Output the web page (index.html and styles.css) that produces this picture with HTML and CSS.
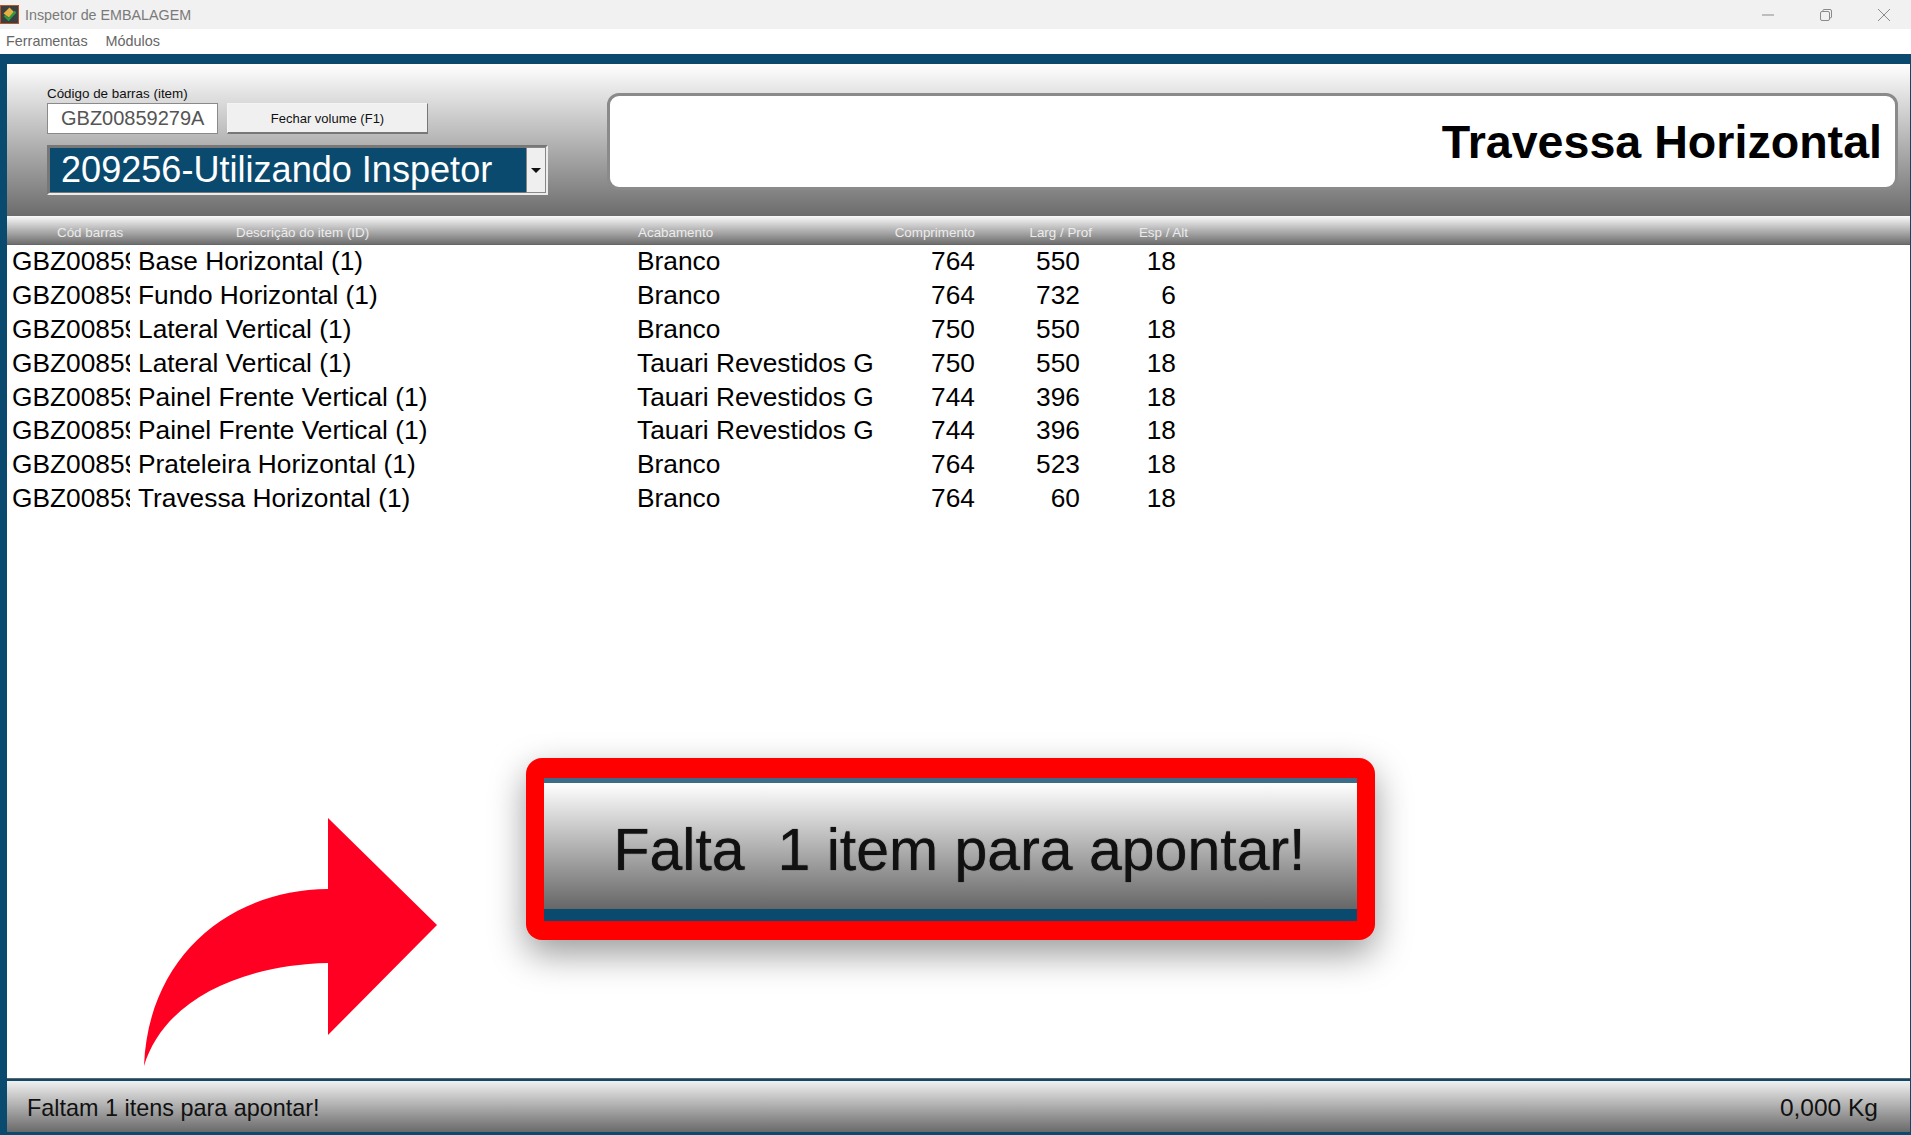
FILE: index.html
```html
<!DOCTYPE html>
<html lang="en">

<head>
    <meta charset="UTF-8">
    <meta name="viewport" content="width=device-width, initial-scale=1.0">
    <title>Inspetor de EMBALAGEM</title>
    <link rel="stylesheet" href="styles.css">
</head>

<body>
    <div class="titlebar">
        <svg class="app-icon" viewBox="0 0 19 19" width="19" height="19">
            <rect x="0.5" y="0.5" width="18" height="18" fill="#3a3f42" stroke="#b5532a" />
            <path d="M9.5 2.5 L15.5 8.5 L9.5 13 L3.5 8.5 Z" fill="#e6b13e" />
            <path d="M4.5 10.5 L8.5 14.5 L15.5 6.5" fill="none" stroke="#2f9a3f" stroke-width="2.4" />
        </svg>
        <span class="app-name">Inspetor de EMBALAGEM</span>
        <div class="win-controls">
            <svg viewBox="0 0 14 14" width="14" height="14">
                <path d="M1 7 H13" stroke="#8a8a8a" fill="none" />
            </svg>
            <svg viewBox="0 0 14 14" width="14" height="14">
                <rect x="1.5" y="3.5" width="9" height="9" rx="1.5" stroke="#8a8a8a" fill="none" />
                <path d="M4 3.5 V2.5 Q4 1.5 5 1.5 H11 Q12.5 1.5 12.5 3 V9 Q12.5 10 11 10" stroke="#8a8a8a" fill="none" />
            </svg>
            <svg viewBox="0 0 14 14" width="14" height="14">
                <path d="M1 1 L13 13 M13 1 L1 13" stroke="#8a8a8a" fill="none" />
            </svg>
        </div>
    </div>

    <div class="menubar">
        <span>Ferramentas</span>
        <span>Módulos</span>
    </div>

    <div class="main">
        <div class="top-panel">
            <div class="scan-col">
                <label class="scan-label">Código de barras (item)</label>
                <div class="scan-row">
                    <div class="scan-input">GBZ00859279A</div>
                    <button class="close-btn">Fechar volume (F1)</button>
                </div>
                <div class="order-select">
                    <span>209256-Utilizando Inspetor</span>
                    <div class="select-arrow"><i></i></div>
                </div>
            </div>
            <div class="current-item">Travessa Horizontal</div>
        </div>

        <div class="list-header row-grid">
            <div class="h-code">Cód barras</div>
            <div class="h-desc">Descrição do item (ID)</div>
            <div class="h-finish">Acabamento</div>
            <div class="h-num">Comprimento</div>
            <div class="h-num">Larg / Prof</div>
            <div class="h-num">Esp / Alt</div>
        </div>

        <div class="list">
            <div class="item row-grid">
                <div class="c-code">GBZ00859</div>
                <div class="c-desc">Base Horizontal (1)</div>
                <div class="c-finish">Branco</div>
                <div class="c-num">764</div>
                <div class="c-num inset">550</div>
                <div class="c-num inset">18</div>
            </div>
            <div class="item row-grid">
                <div class="c-code">GBZ00859</div>
                <div class="c-desc">Fundo Horizontal (1)</div>
                <div class="c-finish">Branco</div>
                <div class="c-num">764</div>
                <div class="c-num inset">732</div>
                <div class="c-num inset">6</div>
            </div>
            <div class="item row-grid">
                <div class="c-code">GBZ00859</div>
                <div class="c-desc">Lateral Vertical (1)</div>
                <div class="c-finish">Branco</div>
                <div class="c-num">750</div>
                <div class="c-num inset">550</div>
                <div class="c-num inset">18</div>
            </div>
            <div class="item row-grid">
                <div class="c-code">GBZ00859</div>
                <div class="c-desc">Lateral Vertical (1)</div>
                <div class="c-finish">Tauari Revestidos G</div>
                <div class="c-num">750</div>
                <div class="c-num inset">550</div>
                <div class="c-num inset">18</div>
            </div>
            <div class="item row-grid">
                <div class="c-code">GBZ00859</div>
                <div class="c-desc">Painel Frente Vertical (1)</div>
                <div class="c-finish">Tauari Revestidos G</div>
                <div class="c-num">744</div>
                <div class="c-num inset">396</div>
                <div class="c-num inset">18</div>
            </div>
            <div class="item row-grid">
                <div class="c-code">GBZ00859</div>
                <div class="c-desc">Painel Frente Vertical (1)</div>
                <div class="c-finish">Tauari Revestidos G</div>
                <div class="c-num">744</div>
                <div class="c-num inset">396</div>
                <div class="c-num inset">18</div>
            </div>
            <div class="item row-grid">
                <div class="c-code">GBZ00859</div>
                <div class="c-desc">Prateleira Horizontal (1)</div>
                <div class="c-finish">Branco</div>
                <div class="c-num">764</div>
                <div class="c-num inset">523</div>
                <div class="c-num inset">18</div>
            </div>
            <div class="item row-grid">
                <div class="c-code">GBZ00859</div>
                <div class="c-desc">Travessa Horizontal (1)</div>
                <div class="c-finish">Branco</div>
                <div class="c-num">764</div>
                <div class="c-num inset">60</div>
                <div class="c-num inset">18</div>
            </div>

            <!-- callout drawn on top of the list -->
            <svg class="callout-arrow" viewBox="0 0 300 250" width="300" height="250">
                <path d="M4 248 C8 140 88 72 188 71 L188 0 L297 107 L188 217 L188 145 C100 147 24 182 4 248 Z" fill="#ff0022" />
            </svg>
            <div class="callout">
                <div class="callout-inner">Falta&nbsp; 1 item para apontar!</div>
            </div>
        </div>

        <div class="status">
            <span>Faltam 1 itens para apontar!</span>
            <span class="weight">0,000 Kg</span>
        </div>
    </div>
</body>

</html>
```

FILE: styles.css
```css
* {
    box-sizing: border-box;
}

body {
    margin: 0;
    height: 1135px;
    overflow: hidden;
    display: flex;
    flex-direction: column;
    font-family: "Liberation Sans", Arial, sans-serif;
    background-color: white;
}

.titlebar {
    height: 29px;
    display: flex;
    align-items: center;
    background-color: #f1f1f1;
    color: #7a7a7a;
    font-size: 14.3px;
}

.app-icon {
    flex-shrink: 0;
}

.app-name {
    margin-left: 6px;
}

.win-controls {
    margin-left: auto;
    display: flex;
    gap: 44px;
    padding-right: 20px;
}

.menubar {
    height: 25px;
    display: flex;
    align-items: center;
    gap: 18px;
    padding: 0 0 2px 6px;
    background-color: white;
    color: #666;
    font-size: 14.4px;
}

.main {
    flex: 1;
    display: flex;
    flex-direction: column;
    min-height: 0;
    padding: 10px 1px 3px 7px;
    background-color: #0a4a6e;
}

.top-panel {
    height: 152px;
    flex-shrink: 0;
    display: flex;
    background: linear-gradient(#ffffff, #6c6c6c);
}

.scan-col {
    width: 600px;
    padding: 22px 0 0 40px;
}

.scan-label {
    display: block;
    height: 17px;
    font-size: 13.4px;
    line-height: 15px;
    color: #111;
}

.scan-row {
    display: flex;
    gap: 9px;
}

.scan-input {
    width: 171px;
    height: 31px;
    border: 1px solid #8a8a8a;
    background-color: white;
    color: #555;
    font-size: 20px;
    line-height: 29px;
    padding-left: 13px;
}

.close-btn {
    width: 201px;
    height: 31px;
    padding: 0;
    font-family: inherit;
    font-size: 13px;
    color: #111;
    background-color: #f0f0f0;
    border: 1px solid #f4f4f4;
    border-right-color: #777;
    border-bottom: 2px solid #777;
}

.order-select {
    width: 501px;
    height: 50px;
    margin-top: 11px;
    display: flex;
    justify-content: space-between;
    background-color: #0a4a6e;
    border: 2px solid #ececec;
    border-top-color: #777;
    border-left-color: #777;
    box-shadow: inset 0 0 0 1px #777;
    color: white;
    font-size: 36.1px;
    line-height: 45px;
    padding-left: 12px;
}

.select-arrow {
    width: 20px;
    display: flex;
    align-items: center;
    justify-content: center;
    background-color: #efefef;
    border: 1px solid #888;
}

.select-arrow i {
    width: 0;
    height: 0;
    border-left: 5px solid transparent;
    border-right: 5px solid transparent;
    border-top: 5px solid #111;
}

.current-item {
    flex: 1;
    height: 97px;
    margin: 29px 12px 0 0;
    padding-right: 13px;
    display: flex;
    align-items: center;
    justify-content: flex-end;
    background-color: white;
    border: 3px solid #8a8a8a;
    border-radius: 12px;
    color: black;
    font-size: 46.6px;
    font-weight: bold;
}

.row-grid {
    display: grid;
    grid-template-columns: 127px 499px 247px 99px 117px 96px;
}

.list-header {
    height: 29px;
    padding-top: 5px;
    flex-shrink: 0;
    align-items: center;
    background: linear-gradient(#fafafa, #6e6e6e);
    border-bottom: 1px solid #666;
    color: #ececec;
    font-size: 13.4px;
    white-space: nowrap;
}

.h-code {
    padding-left: 50px;
}

.h-desc {
    padding-left: 102px;
}

.h-finish {
    padding-left: 5px;
}

.h-num {
    text-align: right;
    padding-right: 4px;
}

.list {
    flex: 1;
    position: relative;
    min-height: 0;
    background-color: white;
    border-bottom: 1px solid #666;
}

.item {
    height: 33.8px;
    align-items: center;
    color: black;
    font-size: 26.3px;
    white-space: nowrap;
}

.c-code {
    padding-left: 5px;
    margin-right: 4px;
    overflow: hidden;
}

.c-desc,
.c-finish {
    padding-left: 4px;
}

.c-finish {
    overflow: hidden;
}

.c-num {
    text-align: right;
    padding-right: 4px;
}

.c-num.inset {
    padding-right: 16px;
}

.callout-arrow {
    position: absolute;
    left: 133px;
    top: 573px;
}

.callout {
    position: absolute;
    left: 519px;
    top: 513px;
    width: 849px;
    height: 182px;
    padding: 20px 18px 19px;
    background-color: #ff0000;
    border-radius: 16px;
    box-shadow: 0 14px 36px rgba(0, 0, 0, 0.4);
}

.callout-inner {
    height: 100%;
    display: flex;
    align-items: center;
    justify-content: center;
    padding: 8px 0 0 18px;
    background: linear-gradient(#ffffff, #666666);
    border-top: 5px solid #3d6c88;
    border-bottom: 12px solid #0a4a6e;
    color: #111;
    font-size: 59px;
    text-shadow: 0 0 1px #111;
}

.status {
    height: 51px;
    margin-top: 2px;
    flex-shrink: 0;
    display: flex;
    align-items: center;
    justify-content: space-between;
    padding: 3px 32px 0 20px;
    background: linear-gradient(#f0f0f0, #6a6a6a);
    color: #111;
    font-size: 23.4px;
}

.weight {
    font-size: 24.5px;
}
```
